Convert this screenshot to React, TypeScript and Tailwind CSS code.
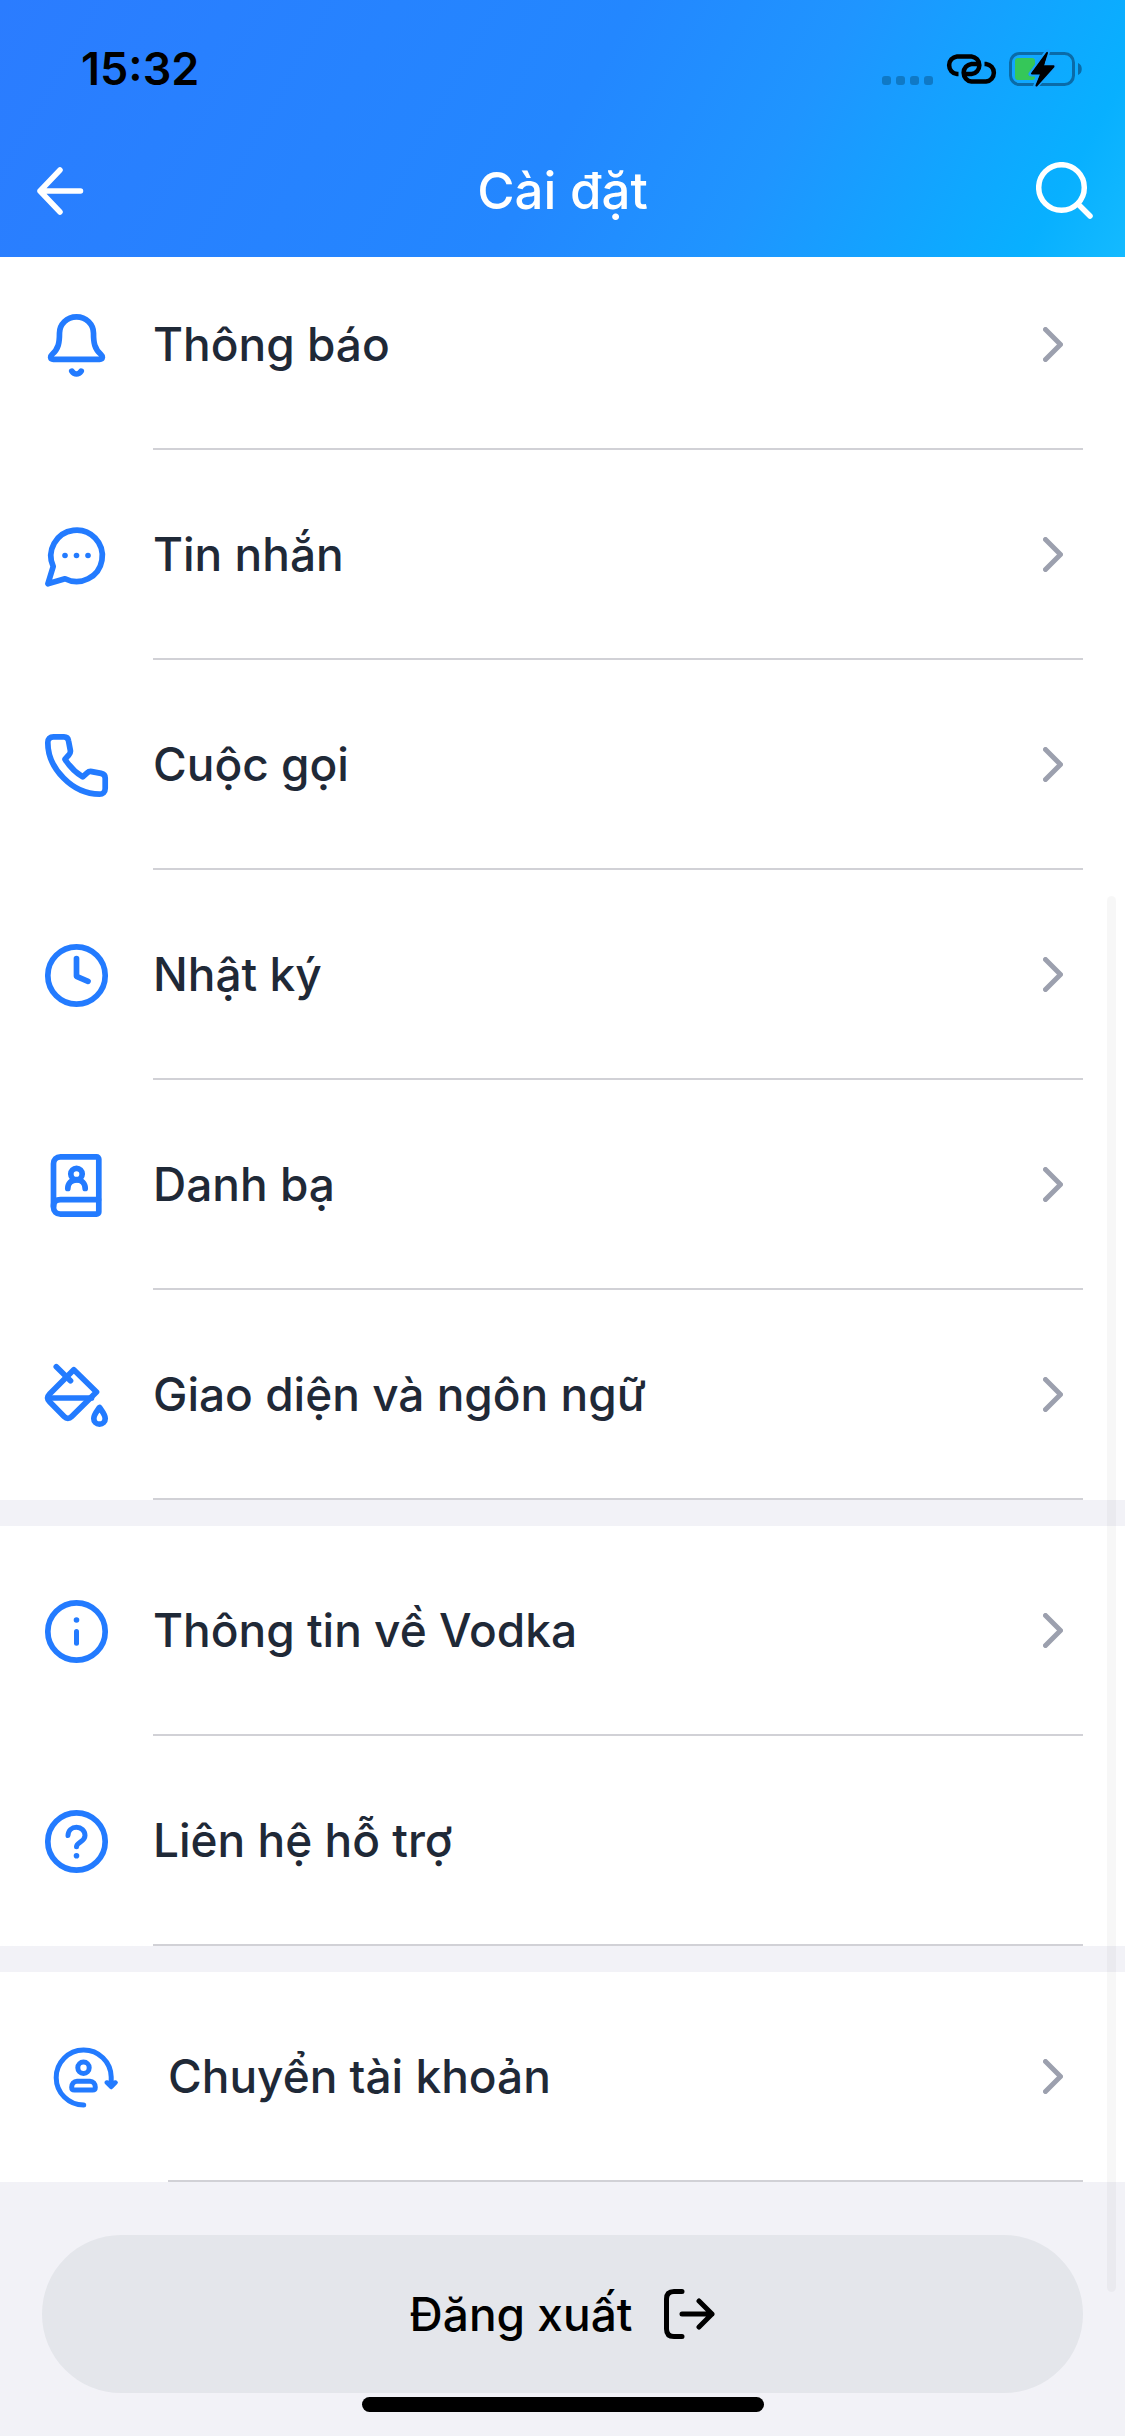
import type { ReactNode } from "react";

function LineIcon({ children }: { children: ReactNode }) {
  return (
    <svg
      viewBox="0 0 63 63"
      className="h-[63px] w-[63px] shrink-0 overflow-visible"
      fill="none"
      stroke="#237bff"
      strokeWidth="5.7"
      strokeLinecap="round"
      strokeLinejoin="round"
      aria-hidden="true"
    >
      {children}
    </svg>
  );
}

const bell = (
  <LineIcon>
    <path d="M31.5 2.8c-9.8 0-17 7.6-17 16.2 0 9.5-.8 15.500-7.500 21.500-1.300 1.200-1.500 1.700-1.400 2.700.2 1.400 1.300 2.200 2.700 2.200h46.400c1.400 0 2.500-.8 2.700-2.200.1-1-.1-1.500-1.400-2.700-6.700-6-7.500-12-7.500-21.500 0-8.600-7.200-16.200-17-16.200Z" />
    <path d="M26.800 57.200c2.500 3.700 6.900 3.700 9.400 0" />
  </LineIcon>
);

const message = (
  <LineIcon>
    <path d="M8.200 42.500A25.700 25.700 0 1 1 20 54.800L2.900 59.800Z" />
    <g fill="#237bff" stroke="none">
      <circle cx="20" cy="31.500" r="2.800" />
      <circle cx="31.500" cy="31.500" r="2.800" />
      <circle cx="43" cy="31.500" r="2.800" />
    </g>
  </LineIcon>
);

const phone = (
  <LineIcon>
    <path d="M8.500 2.800H19c2.500 0 4.100 1.500 4.500 4l1.800 9.300c.4 1.900-.1 3.400-1.500 4.900L20 25.200c4.500 7.300 9.800 12.800 17.700 17.700l4.200-3.800c1.500-1.400 3-1.900 4.900-1.500l9.300 1.800c2.500.5 4.100 2.100 4.100 4.600v10.500c0 3.500-2.400 5.700-5.700 5.700C27.500 60.200 2.800 34.500 2.800 8.500c0-3.400 2.200-5.700 5.700-5.700Z" />
  </LineIcon>
);

const clock = (
  <LineIcon>
    <circle cx="31.500" cy="31.500" r="28.700" />
    <path d="M31.500 14.500v17.800l11.500 5" />
  </LineIcon>
);

const contacts = (
  <LineIcon>
    <path d="M15.500 2.800h36c1.300 0 2.300 1 2.300 2.300v52.800c0 1.300-1 2.300-2.300 2.300h-36c-4.200 0-7-2.800-7-7V9.800c0-4.200 2.800-7 7-7Z" />
    <path d="M8.500 52c0-4.300 2.800-6.300 7-6.300h38" />
    <circle cx="31.500" cy="20" r="5.700" />
    <path d="M22.800 34.500c0-5 3.500-8.600 8.700-8.600s8.700 3.600 8.700 8.600" />
  </LineIcon>
);

const paint = (
  <LineIcon>
    <path d="M28.800 5.700 4.600 30c-2.400 2.500-2.400 5.300 0 7.800l14.500 14.700c2.400 2.400 5.200 2.400 7.600 0L51.500 28Z" />
    <path d="M11.300 2.800 25.500 16.800M3.500 34h43" />
    <path d="M54.500 43.500c-2.800 4-5.700 7.200-5.700 11 0 3.300 2.500 5.700 5.700 5.700s5.700-2.400 5.700-5.700c0-3.800-2.900-7-5.700-11Z" />
  </LineIcon>
);

const info = (
  <LineIcon>
    <circle cx="31.500" cy="31.500" r="28.700" />
    <path d="M31.500 31.500v11.700" strokeWidth="5" />
    <circle cx="31.500" cy="20" r="2.800" fill="#237bff" stroke="none" />
  </LineIcon>
);

const help = (
  <LineIcon>
    <circle cx="31.500" cy="31.500" r="28.700" />
    <path d="M23 25.500c.2-4.800 3.800-8.200 8.500-8.200s8.500 3.400 8.500 8.200c0 6.500-8.500 6.500-8.500 11.300" strokeWidth="5" />
    <circle cx="31.500" cy="45.800" r="2.800" fill="#237bff" stroke="none" />
  </LineIcon>
);

const switchAccount = (
  <LineIcon>
    <path d="M29.700 59A27.500 27.500 0 1 1 57.200 31v7" strokeWidth="5" />
    <path d="M52.700 36.500 57.200 41l4.400-4.500-4.400 1.500Z" fill="#237bff" strokeWidth="4.500" />
    <circle cx="29.500" cy="21.800" r="5.700" strokeWidth="5" />
    <path d="M23 35.300h13c3 0 5.300 2.500 5.300 6 0 2-1 2.700-2.700 2.700H20.400c-1.700 0-2.700-.7-2.700-2.700 0-3.500 2.300-6 5.300-6Z" strokeWidth="5" />
  </LineIcon>
);

type Item = { label: string; icon: ReactNode; arrow: boolean; inset?: boolean };

const groups: Item[][] = [
  [
    { label: "Thông báo", icon: bell, arrow: true },
    { label: "Tin nhắn", icon: message, arrow: true },
    { label: "Cuộc gọi", icon: phone, arrow: true },
    { label: "Nhật ký", icon: clock, arrow: true },
    { label: "Danh bạ", icon: contacts, arrow: true },
    { label: "Giao diện và ngôn ngữ", icon: paint, arrow: true },
  ],
  [
    { label: "Thông tin về Vodka", icon: info, arrow: true },
    { label: "Liên hệ hỗ trợ", icon: help, arrow: false },
  ],
  [{ label: "Chuyển tài khoản", icon: switchAccount, arrow: true, inset: true }],
];

function Row({ label, icon, arrow, inset }: Item) {
  return (
    <li>
      <button
        type="button"
        className={
          inset
            ? "flex h-[210px] w-full items-stretch gap-[51px] pr-[42px] pl-[54px] text-left"
            : "flex h-[210px] w-full items-stretch gap-[45px] pr-[42px] pl-[45px] text-left"
        }
      >
        <span className="flex items-center">{icon}</span>
        <span className="flex flex-1 items-center justify-between border-b-2 border-[#d1d1d6] pr-5">
          <span className="text-[46px] leading-[60px] font-medium text-[#1f2937]">{label}</span>
          {arrow && (
            <svg
              viewBox="0 0 20 35"
              className="h-[35px] w-5"
              fill="none"
              stroke="#9ca0ae"
              strokeWidth="5"
              strokeLinecap="round"
              strokeLinejoin="round"
              aria-hidden="true"
            >
              <path d="M2.500 2.500 17.500 17.500 2.500 32.500" />
            </svg>
          )}
        </span>
      </button>
    </li>
  );
}

function StatusBar() {
  return (
    <div className="flex h-[138px] items-center justify-between pr-[42px] pl-[81px]">
      <span className="text-[45px] leading-[60px] font-semibold text-black">15:32</span>
      <svg viewBox="0 0 204 44" className="h-[44px] w-[204px]" fill="none" aria-hidden="true">
        <g fill="#0f79c6">
          <rect x="3" y="29" width="9" height="9" rx="3" />
          <rect x="17" y="29" width="9" height="9" rx="3" />
          <rect x="31" y="29" width="9" height="9" rx="3" />
          <rect x="45" y="29" width="9" height="9" rx="3" />
        </g>
        <g stroke="#000" strokeWidth="4.500">
          <path d="M79.500 27H78a8.800 8.800 0 0 1 0-17.500h14.500a8.800 8.800 0 0 1 0 17.500H86.500" />
          <path d="M105.500 17h1.500a8.800 8.800 0 0 1 0 17.500H92.500a8.800 8.800 0 0 1 0-17.500H98.500" />
        </g>
        <rect x="131.500" y="6.500" width="63" height="31" rx="9" stroke="#0a6ba8" strokeWidth="3" />
        <path d="M199 16c5 1.500 5 10.500 0 12Z" fill="#0a6ba8" />
        <rect x="136" y="11" width="20" height="22" rx="3" fill="#35c759" />
        <path
          d="M168.500 4.500 152 27h9.500L156.500 39.500 175.500 18.500h-10.500Z"
          fill="#000"
          stroke="#15a2fd"
          strokeWidth="5"
          strokeLinejoin="round"
          paintOrder="stroke"
        />
        <path d="M168 6 153 26.500h9.500L157.500 38.500 174.500 19.500h-11Z" fill="#000" stroke="#000" strokeWidth="2" strokeLinejoin="round" />
      </svg>
    </div>
  );
}

export default function App() {
  return (
    <div className="relative flex min-h-screen flex-col bg-[#f2f2f7] font-['Inter','Noto_Sans',sans-serif]">
      <header className="bg-[linear-gradient(119deg,#2b7cff_0%,#2387ff_50%,#1f95ff_68%,#08b0ff_92%,#14baff_100%)]">
        <StatusBar />
        <div className="grid h-[119px] grid-cols-[1fr_auto_1fr] items-center px-8 pb-[14px] text-white">
          <button type="button" aria-label="Quay lại" className="justify-self-start p-1">
            <svg viewBox="0 0 48 48" className="h-[48px] w-[48px]" fill="none" stroke="currentColor" strokeWidth="5.500" strokeLinecap="round" strokeLinejoin="round" aria-hidden="true">
              <path d="M44.500 24H4M24 3 4 24l20 21" />
            </svg>
          </button>
          <h1 className="text-[51px] leading-[64px] font-medium">Cài đặt</h1>
          <button type="button" aria-label="Tìm kiếm" className="justify-self-end">
            <svg viewBox="0 0 57 57" className="h-[57px] w-[57px]" fill="none" stroke="currentColor" strokeWidth="5.500" strokeLinecap="round" aria-hidden="true">
              <circle cx="25.500" cy="25.500" r="22.800" />
              <path d="m42 42 12 12" />
            </svg>
          </button>
        </div>
      </header>

      <main className="flex flex-1 flex-col gap-[26px]">
        {groups.map((items, i) => (
          <ul key={i} className={i === 0 ? "-mt-[17px] bg-white [clip-path:inset(17px_0_0_0)]" : "bg-white"}>
            {items.map((item) => (
              <Row key={item.label} {...item} />
            ))}
          </ul>
        ))}
        <div className="px-[42px] pt-[27px]">
          <button
            type="button"
            className="flex h-[158px] w-full items-center justify-center gap-8 rounded-full bg-[#e4e6eb] text-[46px] leading-[60px] font-medium text-black"
          >
            Đăng xuất
            <svg viewBox="0 0 51 50" className="h-[50px] w-[51px]" fill="none" stroke="currentColor" strokeWidth="5" strokeLinecap="round" strokeLinejoin="round" aria-hidden="true">
              <path d="M18 2.500H10C5 2.500 2.500 5 2.500 10v30c0 5 2.500 7.500 7.500 7.500h8M18 25h30M35 12l13 13-13 13" />
            </svg>
          </button>
        </div>
      </main>

      <div className="absolute bottom-6 left-1/2 h-[15px] w-[402px] -translate-x-1/2 rounded-full bg-black" />
      <div className="absolute top-[896px] right-[9px] h-[1396px] w-[9px] rounded-full bg-black/3" />
    </div>
  );
}
